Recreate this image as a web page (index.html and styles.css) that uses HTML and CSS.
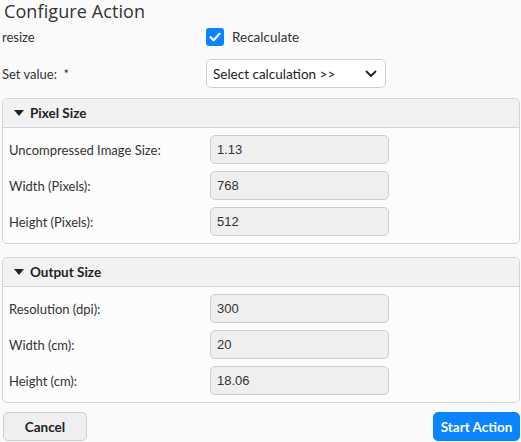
FILE: index.html
```html
<!DOCTYPE html>
<html>
<head>
<meta charset="utf-8">
<link rel="stylesheet" href="styles.css">
</head>
<body>
<div class="page">
  <h1 class="title">Configure Action</h1>
  <div class="top-row row-check">
    <div class="top-label">resize</div>
    <label class="check">
      <span class="box"><svg width="12" height="10" viewBox="0 0 12 10"><path d="M1.5 5.2 L4.6 8.2 L10.5 1.8" fill="none" stroke="#fff" stroke-width="2.2" stroke-linecap="round" stroke-linejoin="round"/></svg></span>
      <span class="check-text">Recalculate</span>
    </label>
  </div>
  <div class="top-row row-select">
    <div class="top-label">Set value: &nbsp;*</div>
    <div class="select">
      <span>Select calculation &gt;&gt;</span>
      <svg class="chev" width="12" height="8" viewBox="0 0 12 8"><path d="M1.5 1.5 L6 6 L10.5 1.5" fill="none" stroke="#222" stroke-width="1.8" stroke-linecap="round" stroke-linejoin="round"/></svg>
    </div>
  </div>

  <section class="panel">
    <div class="panel-head"><span class="tri"></span>Pixel Size</div>
    <div class="panel-body">
      <div class="field"><span class="lbl">Uncompressed Image Size:</span><div class="input">1.13</div></div>
      <div class="field"><span class="lbl">Width (Pixels):</span><div class="input">768</div></div>
      <div class="field"><span class="lbl">Height (Pixels):</span><div class="input">512</div></div>
    </div>
  </section>

  <section class="panel panel-2">
    <div class="panel-head"><span class="tri"></span>Output Size</div>
    <div class="panel-body">
      <div class="field"><span class="lbl">Resolution (dpi):</span><div class="input">300</div></div>
      <div class="field"><span class="lbl">Width (cm):</span><div class="input">20</div></div>
      <div class="field"><span class="lbl">Height (cm):</span><div class="input">18.06</div></div>
    </div>
  </section>

  <div class="actions">
    <button class="btn btn-cancel">Cancel</button>
    <button class="btn btn-primary">Start Action</button>
  </div>
</div>
</body>
</html>
```

FILE: styles.css
```css
html, body {
  margin: 0;
  padding: 0;
  background: #fafafa;
}
body {
  font-family: Lato, "Open Sans", sans-serif;
  font-size: 13px;
  color: #333;
  width: 521px;
  height: 442px;
  overflow: hidden;
}
.page {
  display: flex;
  flex-direction: column;
  padding: 0 1px 0 2px;
}
.title {
  margin: 0;
  font-family: "Open Sans", sans-serif;
  font-size: 18px;
  font-weight: normal;
  line-height: 22px;
  color: #333;
  padding-left: 2px;
  height: 22px;
  letter-spacing: 0.1px;
}
.top-row {
  display: grid;
  grid-template-columns: 204px 1fr;
  align-items: center;
}
.row-check {
  height: 18px;
  margin-top: 6px;
}
.row-select {
  margin-top: 13px;
}
.check {
  display: flex;
  align-items: center;
  gap: 8px;
}
.box {
  width: 18px;
  height: 18px;
  border-radius: 3px;
  background: #0b84ff;
  display: flex;
  align-items: center;
  justify-content: center;
}
.check-text {
  color: #333;
  font-size: 13.5px;
}
.select {
  height: 27px;
  border: 1px solid #cfcfcf;
  border-radius: 5px;
  background: #fff;
  display: flex;
  align-items: center;
  justify-content: space-between;
  padding: 0 8px 0 6px;
  box-sizing: content-box;
  width: 164px;
  color: #222;
  font-size: 13.5px;
}
.chev {
  margin-top: 1px;
}
.panel {
  margin-top: 10px;
  border: 1px solid #d4d4d4;
  border-radius: 5px;
  background: #fcfcfc;
  overflow: hidden;
}
.panel-2 {
  margin-top: 13px;
}
.panel-head {
  height: 28px;
  background: #f2f2f2;
  border-bottom: 1px solid #d4d4d4;
  display: flex;
  align-items: center;
  padding-left: 11px;
  font-weight: bold;
  font-size: 13.5px;
  color: #222;
}
.tri {
  width: 0;
  height: 0;
  border-left: 5px solid transparent;
  border-right: 5px solid transparent;
  border-top: 6px solid #222;
  margin-right: 6px;
}
.panel-body {
  padding: 7px 6px 7px 6px;
  display: flex;
  flex-direction: column;
  gap: 7px;
}
.field {
  display: grid;
  grid-template-columns: 201px 179px;
  align-items: center;
}
.lbl {
  color: #333;
}
.input {
  height: 27px;
  border: 1px solid #cdcdcd;
  border-radius: 5px;
  background: #efefef;
  display: flex;
  align-items: center;
  padding-left: 6px;
  font-family: "Liberation Sans", Arial, sans-serif;
  font-size: 13px;
  color: #333;
}
.actions {
  margin-top: 9px;
  display: flex;
  justify-content: space-between;
  padding-left: 1px;
}
.btn {
  height: 29px;
  border-radius: 5px;
  font-family: Lato, "Open Sans", sans-serif;
  font-size: 13.5px;
  font-weight: bold;
  padding: 0;
  cursor: pointer;
}
.btn-cancel {
  width: 84px;
  background: #efefef;
  border: 1px solid #cdcdcd;
  color: #222;
}
.btn-primary {
  width: 87px;
  background: #0b84ff;
  border: 1px solid #0b84ff;
  color: #fff;
}
```
